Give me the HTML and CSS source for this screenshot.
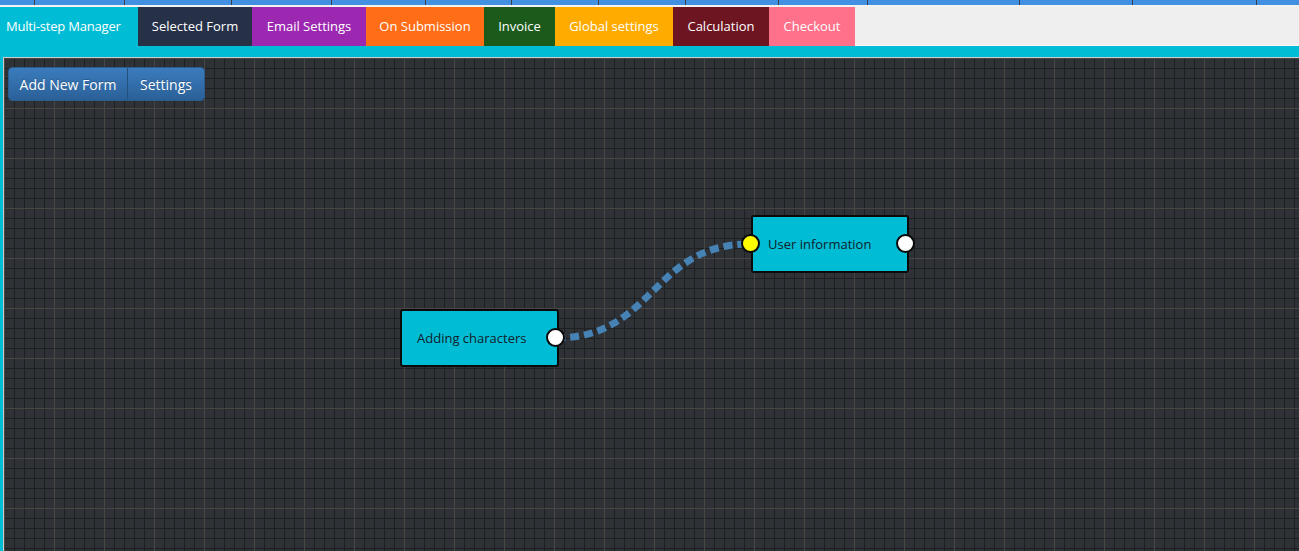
FILE: index.html
```html
<!DOCTYPE html>
<html>
<head>
<meta charset="utf-8">
<link rel="stylesheet" href="styles.css">
</head>
<body>
<div class="topstrip">
  <span></span><span></span><span></span><span></span><span></span><span></span><span></span><span></span><span></span><span></span><span></span><span></span><span></span><span></span>
</div>
<nav class="tabs">
  <a class="tab t-manager">Multi-step Manager</a>
  <a class="tab t-selected">Selected Form</a>
  <a class="tab t-email">Email Settings</a>
  <a class="tab t-submit">On Submission</a>
  <a class="tab t-invoice">Invoice</a>
  <a class="tab t-global">Global settings</a>
  <a class="tab t-calc">Calculation</a>
  <a class="tab t-checkout">Checkout</a>
</nav>
<div class="band"></div>
<main class="canvas">
  <div class="btn-group">
    <button class="btn btn-add">Add New Form</button>
    <button class="btn btn-settings">Settings</button>
  </div>
  <svg class="connection" width="1295" height="493" viewBox="0 0 1295 493">
    <path d="M 552 280 C 650 280, 648 186, 746 186" fill="none" stroke="#4682b4" stroke-width="7" stroke-dasharray="9 5"/>
  </svg>
  <div class="node node-adding">
    <span class="node-label">Adding characters</span>
    <span class="port port-out"></span>
  </div>
  <div class="node node-user">
    <span class="port port-in"></span>
    <span class="node-label">User information</span>
    <span class="port port-out"></span>
  </div>
</main>
</body>
</html>
```
FILE: styles.css
```css
html, body {
  margin: 0;
  padding: 0;
}
body {
  background: #00bcd4;
  font-family: "Open Sans", "Noto Sans", "DejaVu Sans", sans-serif;
  font-size: 13px;
  width: 1299px;
  height: 551px;
  overflow: hidden;
}
.topstrip {
  display: grid;
  grid-template-columns: 35px 90px 107px 100px 94px 86px 87px 87px 93px 89px 152px 113px 124px 1fr;
  height: 5px;
  background: #4290e2;
  border-bottom: 2px solid #f2f2f2;
}
.topstrip span {
  border-right: 1px solid #3a3f47;
}
.topstrip span:last-child {
  border-right: none;
}
.tabs {
  display: flex;
  height: 39px;
  background: #efefef;
  box-shadow: inset 0 -1px 0 #f7f7f7;
}
.tab {
  display: flex;
  align-items: center;
  justify-content: center;
  color: #ffffff;
  white-space: nowrap;
  height: 39px;
  padding-bottom: 1px;
  box-sizing: border-box;
}
.t-manager { width: 138px; background: #00bcd4; justify-content: flex-start; padding-left: 6px; letter-spacing: -0.2px; }
.t-selected { width: 114px; background: #263148; }
.t-email { width: 114px; background: #9c27b0; }
.t-submit { width: 118px; background: #ff6d17; }
.t-invoice { width: 71px; background: #1b5a1b; }
.t-global { width: 118px; background: #ffab00; }
.t-calc { width: 96px; background: #6d1520; }
.t-checkout { width: 86px; background: #ff718a; }
.band {
  height: 11px;
}
.canvas {
  position: relative;
  margin-left: 3px;
  height: 493px;
  border-top: 1px solid #c9cbcc;
  border-left: 1px solid #c9cbcc;
  background-color: #2e3135;
  background-image:
    linear-gradient(to right, #484643 1px, transparent 1px),
    linear-gradient(to bottom, #484643 1px, transparent 1px),
    linear-gradient(to right, #1d1f21 1px, transparent 1px),
    linear-gradient(to bottom, #1d1f21 1px, transparent 1px);
  background-size: 50px 50px, 50px 50px, 10px 10px, 10px 10px;
  overflow: hidden;
}
.btn-group {
  position: relative;
  z-index: 3;
  display: inline-flex;
  margin: 9px 0 0 4px;
  height: 34px;
  border: 1px solid #2a5c8e;
  border-radius: 4px;
  overflow: hidden;
  box-sizing: border-box;
}
.btn {
  font-family: inherit;
  font-size: 14px;
  color: #ffffff;
  border: none;
  margin: 0;
  background: linear-gradient(#3b7cbd, #2b6098);
  text-shadow: 0 -1px 0 rgba(0,0,0,0.2);
  padding: 0;
  cursor: pointer;
}
.btn-add {
  width: 119px;
  border-right: 1px solid #24527f;
}
.btn-settings {
  width: 76px;
}
.connection {
  position: absolute;
  left: 0;
  top: 0;
  z-index: 1;
}
.node {
  position: absolute;
  z-index: 2;
  width: 159px;
  height: 58px;
  box-sizing: border-box;
  background: #00bcd4;
  border: 2px solid #0a0a0a;
  border-radius: 3px;
  display: flex;
  align-items: center;
  color: #11202b;
}
.node-adding {
  left: 396px;
  top: 251px;
}
.node-user {
  left: 747px;
  top: 157px;
  width: 158px;
}
.node-label {
  margin-left: 15px;
}
.port {
  position: absolute;
  top: 50%;
  width: 19px;
  height: 19px;
  margin-top: -10.5px;
  box-sizing: border-box;
  border: 2px solid #0a0a0a;
  border-radius: 50%;
  background: #ffffff;
}
.port-out {
  right: -8px;
}
.port-in {
  left: -12px;
  background: #ffff00;
}
```
